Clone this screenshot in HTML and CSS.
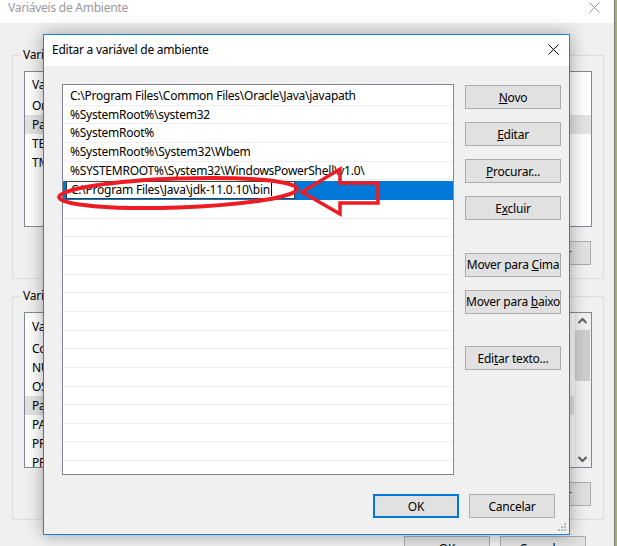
FILE: index.html
```html
<!DOCTYPE html>
<html lang="pt-BR">
<head>
  <meta charset="UTF-8" />
  <title>Editar a variável de ambiente</title>
  <link rel="stylesheet" href="styles.css">
</head>
<body>
  <div class="win">
    <div class="win-title">
      <span>Variáveis de Ambiente</span>
      <svg class="x-icon grey" width="11" height="11" viewBox="0 0 11 11"><path d="M0.5 0.5 L10.5 10.5 M10.5 0.5 L0.5 10.5" /></svg>
    </div>
    <div class="win-body">
      <div class="group">
        <div class="group-label">Variáveis de usuário para Aluno</div>
        <div class="vlist">
          <div class="vlist-rows">
            <div class="vhead"><span class="c1">Variável</span><span>Valor</span></div>
            <div class="vrow"><span class="c1">OneDrive</span><span>C:\Users\Aluno\OneDrive</span></div>
            <div class="vrow sel"><span class="c1">Path</span><span>C:\Users\Aluno\AppData\Local\Microsoft\WindowsApps;</span></div>
            <div class="vrow"><span class="c1">TEMP</span><span>C:\Users\Aluno\AppData\Local\Temp</span></div>
            <div class="vrow"><span class="c1">TMP</span><span>C:\Users\Aluno\AppData\Local\Temp</span></div>
          </div>
        </div>
        <div class="vbtns">
          <button class="btn">Novo...</button>
          <button class="btn">Editar...</button>
          <button class="btn">Excluir</button>
        </div>
      </div>

      <div class="group second">
        <div class="group-label">Variáveis do sistema</div>
        <div class="vlist">
          <div class="vlist-rows">
            <div class="vhead tall"><span class="c1">Variável</span><span>Valor</span></div>
            <div class="vrow"><span class="c1">ComSpec</span><span>C:\Windows\system32\cmd.exe</span></div>
            <div class="vrow"><span class="c1">NUMBER_OF_PROCESSORS</span><span>4</span></div>
            <div class="vrow"><span class="c1">OS</span><span>Windows_NT</span></div>
            <div class="vrow sel"><span class="c1">Path</span><span>C:\Program Files\Common Files\Oracle\Java\javapath;</span></div>
            <div class="vrow"><span class="c1">PATHEXT</span><span>.COM;.EXE;.BAT;.CMD;.VBS;.VBE;.JS</span></div>
            <div class="vrow"><span class="c1">PROCESSOR_ARCHITECTURE</span><span>AMD64</span></div>
            <div class="vrow"><span class="c1">PROCESSOR_IDENTIFIER</span><span>Intel64 Family 6</span></div>
          </div>
          <div class="scrollbar">
            <svg width="17" height="17" viewBox="0 0 17 17"><path d="M4.5 10 L8.5 6 L12.5 10" /></svg>
            <div class="thumb"></div>
            <div class="track"></div>
            <svg width="17" height="17" viewBox="0 0 17 17"><path d="M4.5 7 L8.5 11 L12.5 7" /></svg>
          </div>
        </div>
        <div class="vbtns">
          <button class="btn">Novo...</button>
          <button class="btn">Editar...</button>
          <button class="btn">Excluir</button>
        </div>
      </div>

      <div class="win-foot">
        <button class="btn wide">OK</button>
        <button class="btn wide">Cancelar</button>
      </div>
    </div>
  </div>

  <div class="dialog">
    <div class="dlg-title">
      <span>Editar a variável de ambiente</span>
      <svg class="x-icon" width="11" height="11" viewBox="0 0 11 11"><path d="M0.5 0.5 L10.5 10.5 M10.5 0.5 L0.5 10.5" /></svg>
    </div>
    <div class="dlg-body">
      <div class="dlg-main">
        <div class="paths">
          <div class="prow">C:\Program Files\Common Files\Oracle\Java\javapath</div>
          <div class="prow">%SystemRoot%\system32</div>
          <div class="prow">%SystemRoot%</div>
          <div class="prow">%SystemRoot%\System32\Wbem</div>
          <div class="prow">%SYSTEMROOT%\System32\WindowsPowerShell\v1.0\</div>
          <div class="prow editing">
            <div class="edit">C:\Program Files\Java\jdk-11.0.10\bin<span class="caret"></span></div>
          </div>
          <div class="prow"></div><div class="prow"></div><div class="prow"></div>
          <div class="prow"></div><div class="prow"></div><div class="prow"></div>
          <div class="prow"></div><div class="prow"></div><div class="prow"></div>
          <div class="prow"></div><div class="prow"></div><div class="prow"></div>
          <div class="prow"></div><div class="prow"></div><div class="prow"></div>
        </div>
        <div class="side">
          <button class="btn side-btn"><u>N</u>ovo</button>
          <button class="btn side-btn"><u>E</u>ditar</button>
          <button class="btn side-btn"><u>P</u>rocurar...</button>
          <button class="btn side-btn">E<u>x</u>cluir</button>
          <button class="btn side-btn gap-big">Mover para <u>C</u>ima</button>
          <button class="btn side-btn">Mover para <u>b</u>aixo</button>
          <button class="btn side-btn gap-big">Edi<u>t</u>ar texto...</button>
        </div>
      </div>
      <div class="dlg-foot">
        <button class="btn wide default">OK</button>
        <button class="btn wide">Cancelar</button>
      </div>
    </div>
    <svg class="grip" width="9" height="9" viewBox="0 0 9 9">
      <rect x="7" y="1" width="2" height="2" />
      <rect x="4" y="4" width="2" height="2" /><rect x="7" y="4" width="2" height="2" />
      <rect x="1" y="7" width="2" height="2" /><rect x="4" y="7" width="2" height="2" /><rect x="7" y="7" width="2" height="2" />
    </svg>
  </div>

  <!-- red marks drawn over the screenshot -->
  <svg class="marks" width="617" height="546" viewBox="0 0 617 546">
    <ellipse cx="178" cy="193" rx="119" ry="14.5" transform="rotate(-2 178 193)" />
    <path d="M302 192 L340 169 L340 183 L378 183 L378 203 L340 203 L340 214 Z" />
  </svg>
</body>
</html>
```

FILE: styles.css
```css
html {
  overflow: hidden;
}

body {
  margin: 0;
  width: 617px;
  height: 546px;
  overflow: hidden;
  position: relative;
  background: #a8b070;
  font-family: "Noto Sans", sans-serif;
  font-size: 12px;
  letter-spacing: -0.25px;
  color: #000;
}

button {
  font-family: inherit;
  font-size: 12px;
  letter-spacing: -0.25px;
  color: #000;
}

.btn {
  height: 24px;
  padding: 0;
  background: #e1e1e1;
  border: 1px solid #adadad;
  box-sizing: border-box;
  white-space: nowrap;
}

.wide {
  width: 86px;
}

.x-icon path {
  stroke: #000;
  stroke-width: 1;
  fill: none;
}

.x-icon.grey path {
  stroke: #999;
}

/* background window */
.win {
  width: 614px;
  height: 546px;
  overflow: hidden;
  background: #f0f0f0;
  border-right: 1px solid #7c7c7c;
}

.win-title {
  height: 23px;
  background: #fff;
  display: flex;
  justify-content: space-between;
  padding: 0 14px 0 8px;
  line-height: 16px;
  color: #999;
}

.win-title .x-icon {
  margin-top: 2px;
}

.win-body {
  padding: 32px 0 0 12px;
}

.group {
  width: 592px;
  border: 1px solid #dcdcdc;
  padding: 0 11px 13px 11px;
  box-sizing: border-box;
}

.group.second {
  margin-top: 17px;
}

.group-label {
  width: max-content;
  margin: -9px 0 0 -4px;
  padding: 0 3px;
  line-height: 16px;
  background: #f0f0f0;
}

.vlist {
  margin-top: 8px;
  height: 156px;
  background: #fff;
  border: 1px solid #828790;
  box-sizing: border-box;
  display: flex;
  overflow: hidden;
}

.vlist-rows {
  flex: 1;
}

.vhead {
  height: 24px;
  display: flex;
  align-items: center;
}

.vhead.tall {
  height: 26px;
}

.vrow {
  height: 19px;
  display: flex;
  align-items: center;
}

.vrow.sel {
  background: #e3e3e3;
}

.c1 {
  width: 170px;
  padding-left: 7px;
}

.scrollbar {
  width: 17px;
  background: #f0f0f0;
  display: flex;
  flex-direction: column;
  align-items: center;
}

.scrollbar path {
  stroke: #606060;
  stroke-width: 2;
  fill: none;
}

.thumb {
  width: 15px;
  height: 51px;
  background: #cdcdcd;
}

.track {
  flex: 1;
}

.vbtns {
  margin-top: 14px;
  display: flex;
  justify-content: flex-end;
  gap: 8px;
}

.vbtns .btn {
  width: 75px;
  margin-right: 1px;
}

.win-foot {
  margin-top: 16px;
  display: flex;
  gap: 10px;
  padding-left: 392px;
}

/* dialog on top */
.dialog {
  position: absolute;
  left: 43px;
  top: 34px;
  width: 527px;
  height: 501px;
  box-sizing: border-box;
  background: #f0f0f0;
  border: 1px solid #1883d7;
  box-shadow: 0 0 16px rgba(0, 0, 0, 0.35);
}

.dlg-title {
  height: 31px;
  background: #fff;
  display: flex;
  align-items: center;
  justify-content: space-between;
  padding: 0 10px 2px 8px;
  box-sizing: border-box;
}

.dlg-body {
  padding: 18px 7px 0 18px;
}

.dlg-main {
  display: flex;
  gap: 11px;
}

.paths {
  flex-shrink: 0;
  width: 392px;
  height: 391px;
  box-sizing: border-box;
  background: #fff;
  border: 1px solid #828790;
  padding-top: 2px;
  overflow: hidden;
}

.prow {
  height: 18.67px;
  box-sizing: border-box;
  border-bottom: 1px solid #efefef;
  padding-left: 7px;
  line-height: 18px;
  white-space: nowrap;
}

.prow.editing {
  background: #0078d7;
  padding-left: 3px;
  border-bottom-color: #0078d7;
}

.edit {
  width: 229px;
  height: 18px;
  box-sizing: border-box;
  background: #fff;
  border: 1px solid #3c3c3c;
  padding-left: 4px;
  line-height: 16px;
  margin-top: 1px;
}

.caret {
  display: inline-block;
  width: 1px;
  height: 13px;
  background: #000;
  vertical-align: -2px;
  margin-left: 1px;
}

.side {
  flex-shrink: 0;
  display: flex;
  flex-direction: column;
  padding-top: 1px;
}

.side-btn {
  width: 96px;
  margin-bottom: 13px;
}

.side-btn.gap-big {
  margin-top: 19.5px;
}

.dlg-foot {
  margin-top: 19px;
  padding-right: 7px;
  display: flex;
  justify-content: flex-end;
  gap: 10px;
}

.default {
  border: 2px solid #0078d7;
}

.grip {
  position: absolute;
  right: 3px;
  bottom: 3px;
}

.grip rect {
  fill: #b8b8b8;
}

.marks {
  position: absolute;
  left: 0;
  top: 0;
  pointer-events: none;
}

.marks ellipse,
.marks path {
  fill: none;
  stroke: #ed1c24;
  stroke-width: 4;
}

.marks path {
  stroke-width: 3.5;
}
```
